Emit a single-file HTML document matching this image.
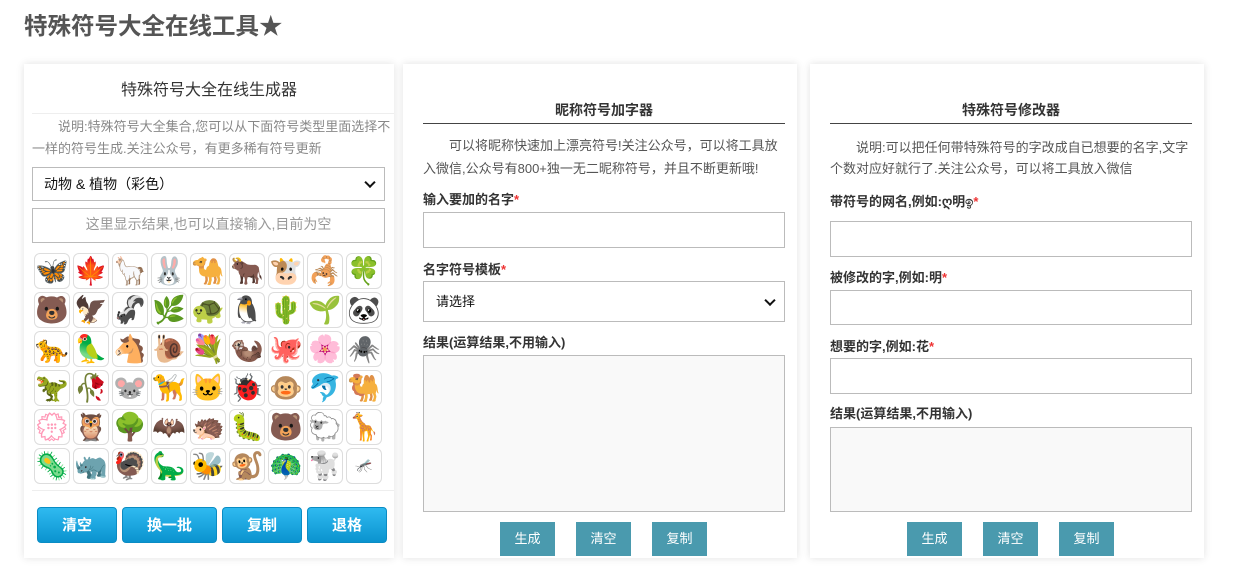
<!DOCTYPE html>
<html><head><meta charset="utf-8"><style>
*{box-sizing:border-box;margin:0;padding:0}
body{width:1240px;height:569px;background:#fff;font-family:"Liberation Sans","Noto Sans CJK SC",sans-serif;position:relative;overflow:hidden;color:#333}
.a{position:absolute}
h1{position:absolute;left:24px;top:7px;font-size:23.5px;font-weight:bold;color:#555}
.card{position:absolute;background:#fff;box-shadow:0 0 8px rgba(0,0,0,.12);top:64px;height:494px}
.box{position:absolute;border:1px solid #bbb;background:#fff}
.ta{background:#f9f9f9}
.lab{position:absolute;font-size:13px;font-weight:bold;color:#333}
.lab b{color:#e33}
.desc{position:absolute;font-size:13px;line-height:22px;color:#555;text-indent:2em}
.tb{position:absolute;background:#4a9aae;color:#fff;font-size:13px;text-align:center;line-height:34px;width:55px;height:34px;top:522px}
.bb{position:absolute;top:507px;height:36px;border-radius:4px;background:linear-gradient(#2fbaf0,#0a93cf);color:#fff;font-weight:bold;font-size:15px;text-align:center;line-height:36px;border:1px solid #0a8cc4}
.em{position:absolute;width:36px;height:36px;border:1px solid #ddd;border-radius:6px;font-size:27px;line-height:34px;text-align:center;font-family:"Noto Color Emoji","DejaVu Sans",sans-serif;overflow:hidden}
.sel::after{content:"";position:absolute;right:10px;top:50%;width:6px;height:6px;border-right:2px solid #111;border-bottom:2px solid #111;transform:translateY(-70%) rotate(45deg)}
.ttl{position:absolute;font-size:14px;font-weight:bold;text-align:center;border-bottom:1px solid #444;height:24px}
</style></head><body>
<h1>特殊符号大全在线工具★</h1>

<div class="card" style="left:24px;width:370px"></div>
<div class="a" style="left:24px;width:370px;top:76px;text-align:center;font-size:16px;color:#333">特殊符号大全在线生成器</div>
<div class="a" style="left:32px;width:362px;top:113px;border-top:1px solid #eee"></div>
<div class="desc" style="left:32px;width:362px;top:116px;color:#888">说明:特殊符号大全集合,您可以从下面符号类型里面选择不一样的符号生成.关注公众号，有更多稀有符号更新</div>
<div class="box sel" style="left:32px;top:167px;width:353px;height:34px;font-size:14px;line-height:32px;padding-left:11px;color:#111">动物 &amp; 植物（彩色）</div>
<div class="box" style="left:32px;top:208px;width:353px;height:35px;font-size:14px;line-height:30px;text-align:center;color:#999">这里显示结果,也可以直接输入,目前为空</div>
<div class="a" style="left:32px;width:362px;top:490px;border-top:1px solid #eee"></div>
<div class="bb" style="left:37px;width:80px">清空</div>
<div class="bb" style="left:122px;width:95px">换一批</div>
<div class="bb" style="left:222px;width:80px">复制</div>
<div class="bb" style="left:307px;width:80px">退格</div>

<div class="card" style="left:403px;width:394px"></div>
<div class="ttl" style="left:423px;width:362px;top:100px">昵称符号加字器</div>
<div class="desc" style="left:423px;width:362px;top:134px;line-height:23px">可以将昵称快速加上漂亮符号!关注公众号，可以将工具放入微信,公众号有800+独一无二昵称符号，并且不断更新哦!</div>
<div class="lab" style="left:423px;top:189px">输入要加的名字<b>*</b></div>
<div class="box" style="left:423px;top:212px;width:362px;height:36px"></div>
<div class="lab" style="left:423px;top:259px">名字符号模板<b>*</b></div>
<div class="box sel" style="left:423px;top:281px;width:362px;height:41px;font-size:13px;line-height:39px;padding-left:12px;color:#111">请选择</div>
<div class="lab" style="left:423px;top:332px">结果(运算结果,不用输入)</div>
<div class="box ta" style="left:423px;top:355px;width:362px;height:157px"></div>
<div class="tb" style="left:500px">生成</div><div class="tb" style="left:576px">清空</div><div class="tb" style="left:652px">复制</div>

<div class="card" style="left:810px;width:394px"></div>
<div class="ttl" style="left:830px;width:362px;top:100px">特殊符号修改器</div>
<div class="desc" style="left:830px;width:362px;top:137px;line-height:21px">说明:可以把任何带特殊符号的字改成自已想要的名字,文字个数对应好就行了.关注公众号，可以将工具放入微信</div>
<div class="lab" style="left:830px;top:191px">带符号的网名,例如:ღ明ඉ<b>*</b></div>
<div class="box" style="left:830px;top:221px;width:362px;height:36px"></div>
<div class="lab" style="left:830px;top:267px">被修改的字,例如:明<b>*</b></div>
<div class="box" style="left:830px;top:290px;width:362px;height:35px"></div>
<div class="lab" style="left:830px;top:336px">想要的字,例如:花<b>*</b></div>
<div class="box" style="left:830px;top:358px;width:362px;height:36px"></div>
<div class="lab" style="left:830px;top:403px">结果(运算结果,不用输入)</div>
<div class="box ta" style="left:830px;top:427px;width:362px;height:85px"></div>
<div class="tb" style="left:907px">生成</div><div class="tb" style="left:983px">清空</div><div class="tb" style="left:1059px">复制</div>

<div class="em" style="left:34px;top:253px">🦋</div><div class="em" style="left:73px;top:253px">🍁</div><div class="em" style="left:112px;top:253px">🦙</div><div class="em" style="left:151px;top:253px">🐰</div><div class="em" style="left:190px;top:253px">🐪</div><div class="em" style="left:229px;top:253px">🐂</div><div class="em" style="left:268px;top:253px">🐮</div><div class="em" style="left:307px;top:253px">🦂</div><div class="em" style="left:346px;top:253px">🍀</div>
<div class="em" style="left:34px;top:292px">🐻</div><div class="em" style="left:73px;top:292px">🦅</div><div class="em" style="left:112px;top:292px">🦨</div><div class="em" style="left:151px;top:292px">🌿</div><div class="em" style="left:190px;top:292px">🐢</div><div class="em" style="left:229px;top:292px">🐧</div><div class="em" style="left:268px;top:292px">🌵</div><div class="em" style="left:307px;top:292px">🌱</div><div class="em" style="left:346px;top:292px">🐼</div>
<div class="em" style="left:34px;top:331px">🐆</div><div class="em" style="left:73px;top:331px">🦜</div><div class="em" style="left:112px;top:331px">🐴</div><div class="em" style="left:151px;top:331px">🐌</div><div class="em" style="left:190px;top:331px">💐</div><div class="em" style="left:229px;top:331px">🦦</div><div class="em" style="left:268px;top:331px">🐙</div><div class="em" style="left:307px;top:331px">🌸</div><div class="em" style="left:346px;top:331px">🕷</div>
<div class="em" style="left:34px;top:370px">🦖</div><div class="em" style="left:73px;top:370px">🥀</div><div class="em" style="left:112px;top:370px">🐭</div><div class="em" style="left:151px;top:370px">🦮</div><div class="em" style="left:190px;top:370px">🐱</div><div class="em" style="left:229px;top:370px">🐞</div><div class="em" style="left:268px;top:370px">🐵</div><div class="em" style="left:307px;top:370px">🐬</div><div class="em" style="left:346px;top:370px">🐫</div>
<div class="em" style="left:34px;top:409px">💮</div><div class="em" style="left:73px;top:409px">🦉</div><div class="em" style="left:112px;top:409px">🌳</div><div class="em" style="left:151px;top:409px">🦇</div><div class="em" style="left:190px;top:409px">🦔</div><div class="em" style="left:229px;top:409px">🐛</div><div class="em" style="left:268px;top:409px">🐻</div><div class="em" style="left:307px;top:409px">🐑</div><div class="em" style="left:346px;top:409px">🦒</div>
<div class="em" style="left:34px;top:448px">🦠</div><div class="em" style="left:73px;top:448px">🦏</div><div class="em" style="left:112px;top:448px">🦃</div><div class="em" style="left:151px;top:448px">🦕</div><div class="em" style="left:190px;top:448px">🐝</div><div class="em" style="left:229px;top:448px">🐒</div><div class="em" style="left:268px;top:448px">🦚</div><div class="em" style="left:307px;top:448px">🐩</div><div class="em" style="left:346px;top:448px;font-size:14px">🦟</div>
</body></html>
